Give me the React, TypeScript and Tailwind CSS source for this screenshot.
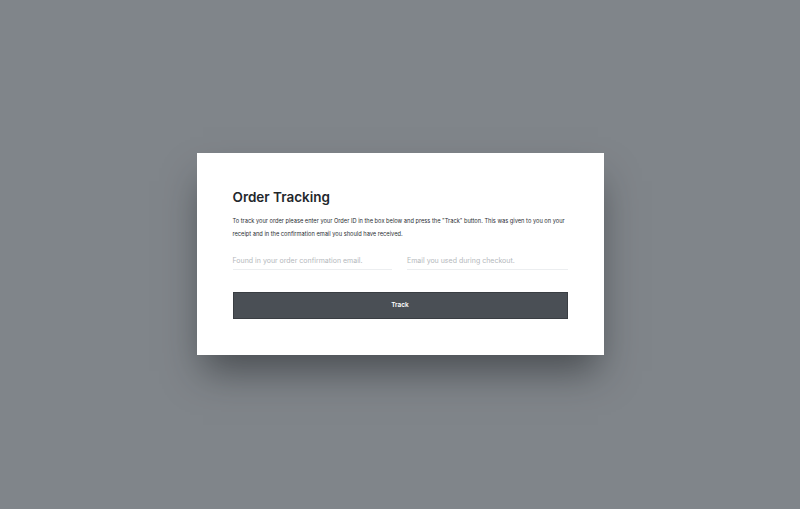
import React from "react";

export default function App() {
  return (
    <div
      className="w-[800px] h-[509px] bg-[#80858a] flex items-start justify-center pt-[153px]"
      style={{ fontFamily: "Inter, 'Noto Sans', sans-serif" }}
    >
      <div className="w-[407px] h-[202px] bg-white px-[36px] pt-[34px] shadow-[0_22px_36px_-6px_rgba(30,32,36,0.55)] flex flex-col">
        <h1 className="text-[13.5px] leading-[20px] font-semibold text-[#23272c]">Order Tracking</h1>
        <p className="mt-[7px] text-[5.7px] leading-[13px] text-[#2a2e33]">
          To track your order please enter your Order ID in the box below and press the &quot;Track&quot; button. This was given to you on your receipt and in the confirmation email you should have received.
        </p>
        <div className="mt-[16px] flex gap-[15px]">
          <div className="w-[160px] border-b border-[#eceef0] pb-[3px]">
            <span className="text-[7px] leading-[10px] text-[#b4b8bc] block">Found in your order confirmation email.</span>
          </div>
          <div className="w-[161px] border-b border-[#eceef0] pb-[3px]">
            <span className="text-[7px] leading-[10px] text-[#b4b8bc] block">Email you used during checkout.</span>
          </div>
        </div>
        <button className="mt-[22px] w-[335px] h-[27px] bg-[#4a4f55] border border-[#3a3e43] text-white text-[6.5px] font-semibold flex items-center justify-center">
          Track
        </button>
      </div>
    </div>
  );
}
